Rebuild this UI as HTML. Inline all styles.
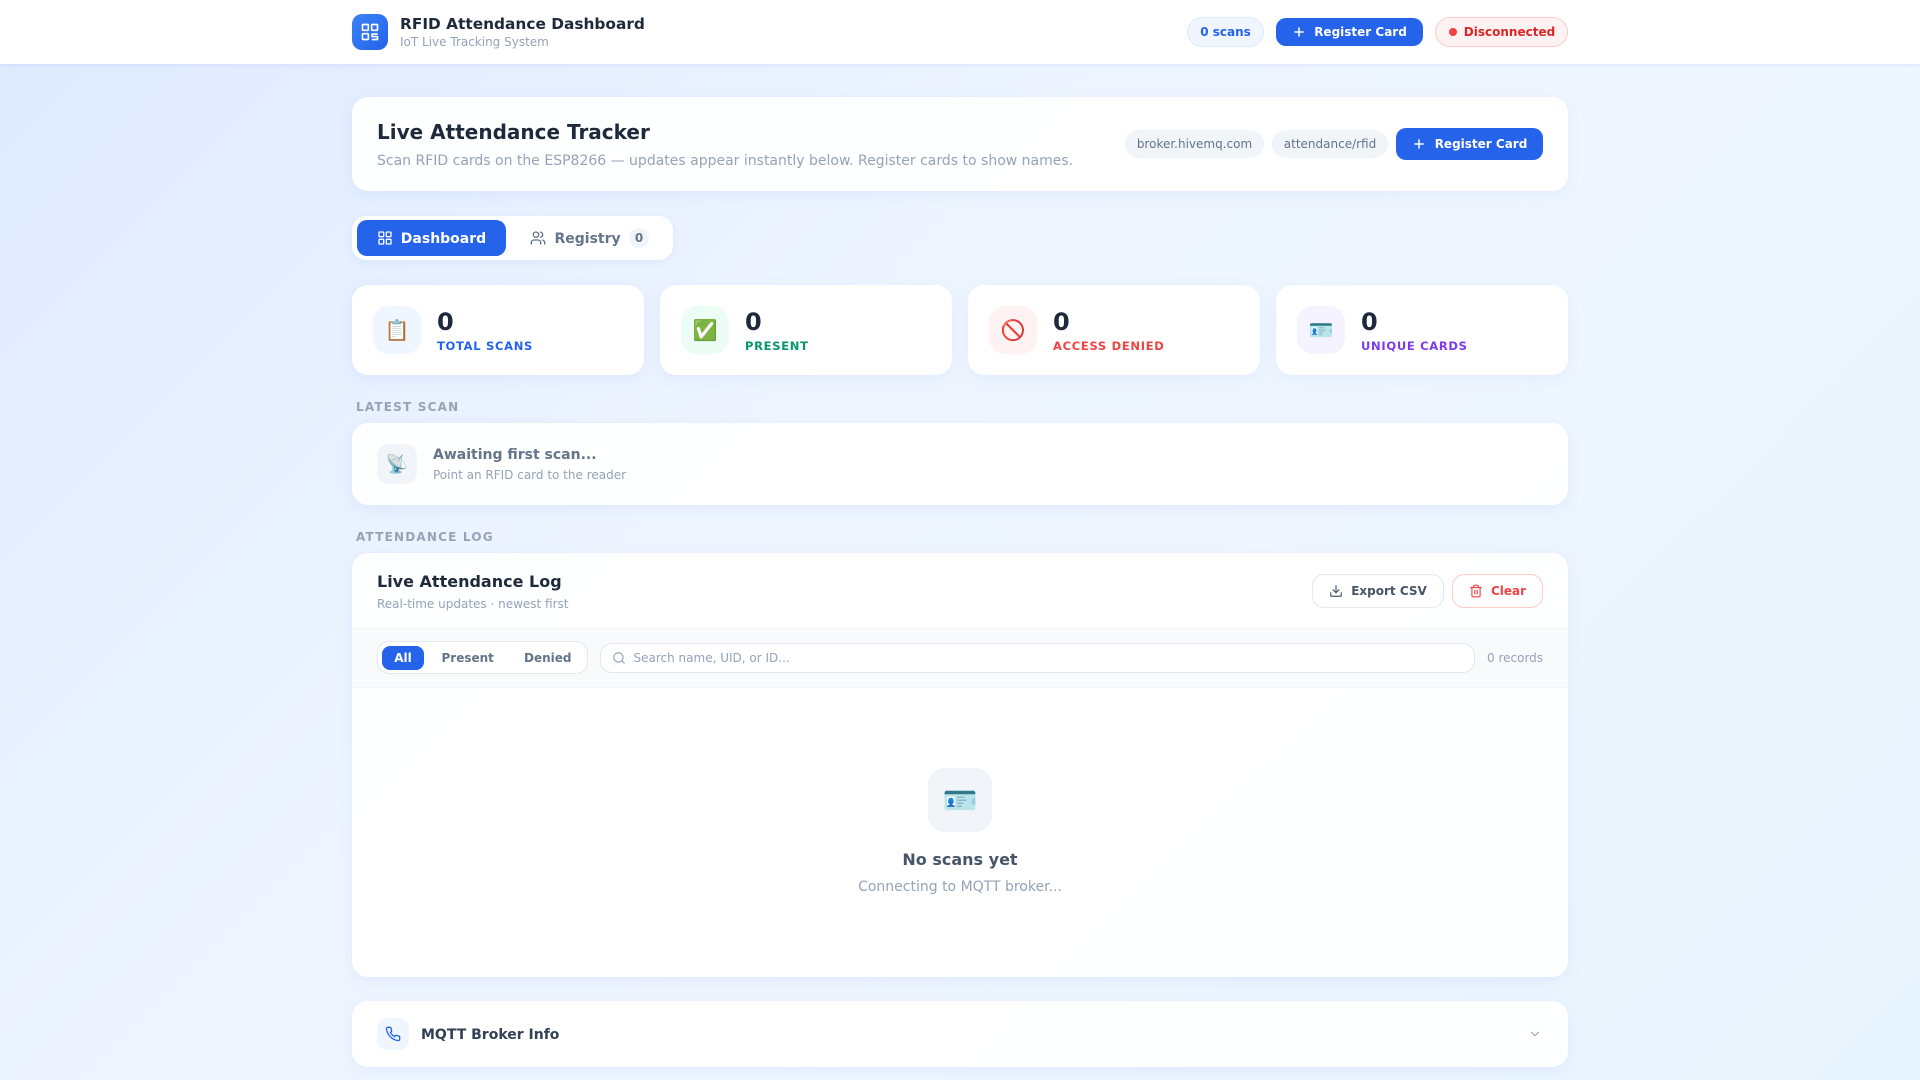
<!DOCTYPE html>
<html lang="en">
<head>
<meta charset="utf-8">
<title>RFID Attendance Dashboard</title>
<style>
*{box-sizing:border-box;margin:0;padding:0}
html,body{width:1920px;height:1080px;overflow:hidden}
body{position:relative;font-family:"DejaVu Sans","Liberation Sans",sans-serif;background:linear-gradient(135deg,#deE9fe 0%,#eef5ff 40%,#eff6ff 60%,#e8f4fd 100%);color:#1e293b}
.a{position:absolute}
.fx{display:flex;align-items:center;justify-content:center;white-space:nowrap}
.card{position:absolute;left:352px;width:1216px;background:rgba(255,255,255,.95);border-radius:16px;box-shadow:0 4px 16px rgba(37,99,235,.07)}
.t{position:absolute;white-space:nowrap;line-height:1}
svg{display:block;fill:none;stroke:currentColor;stroke-linecap:round;stroke-linejoin:round}
.btn{position:absolute;background:#2563eb;color:#fff;font-weight:700;font-size:12px;gap:8px}
.chip{position:absolute;background:#f1f5f9;color:#64748b;font-size:12px;border-radius:14px}
.stat{position:absolute;top:285px;width:292px;height:90px;background:rgba(255,255,255,.97);border-radius:16px;box-shadow:0 4px 16px rgba(37,99,235,.07)}
.ic{position:absolute;left:21px;top:21px;width:48px;height:48px;border-radius:16px;font-size:20px;line-height:1}
.num{position:absolute;left:85px;top:25px;font-size:24px;font-weight:700;line-height:24px;color:#1e293b}
.lbl{position:absolute;left:85px;top:54px;font-size:11.52px;font-weight:700;letter-spacing:.69px;line-height:14px;white-space:nowrap}
.sec{position:absolute;left:356px;font-size:12px;font-weight:700;letter-spacing:1.2px;color:#94a3b8;line-height:14px;white-space:nowrap}
</style>
</head>
<body>
<div class="a" style="left:0;top:0;width:1920px;height:64px;background:#fff;box-shadow:0 1px 4px rgba(37,99,235,.1)"></div>
<div class="a fx" style="left:352px;top:14px;width:36px;height:36px;border-radius:10px;background:linear-gradient(135deg,#3b82f6,#2563eb);color:#fff">
<svg width="20" height="20" viewBox="0 0 24 24" stroke-width="2"><rect x="3" y="3" width="7" height="7" rx="1"/><rect x="14" y="3" width="7" height="7" rx="1"/><rect x="3" y="14" width="7" height="7" rx="1"/><path d="M20.5 14.5h-6v3h6.5v3.5h-6"/></svg></div>
<div class="t" style="left:400px;top:15px;font-size:15.36px;font-weight:700;line-height:18px;color:#1e293b">RFID Attendance Dashboard</div>
<div class="t" style="left:400px;top:35px;font-size:12px;line-height:14px;color:#94a3b8">IoT Live Tracking System</div>

<div class="a fx" style="left:1187px;top:17px;width:77px;height:30px;border-radius:15px;background:#eff6ff;border:1px solid #dbeafe;color:#2563eb;font-size:12px;font-weight:700">0 scans</div>
<div class="btn fx" style="left:1276px;top:18px;width:147px;height:28px;border-radius:10px;gap:7px"><svg width="14" height="14" viewBox="0 0 24 24" stroke-width="2.5" style="margin-right:1px"><path d="M12 5v14M5 12h14"/></svg>Register Card</div>
<div class="a fx" style="left:1435px;top:17px;width:133px;height:30px;border-radius:15px;background:#fef2f2;border:1px solid #fecaca;color:#dc2626;font-size:12px;font-weight:700;gap:7px;padding-left:1px"><span style="width:8px;height:8px;border-radius:50%;background:#ef4444"></span>Disconnected</div>

<div class="card" style="top:97px;height:94px"></div>
<div class="t" style="left:377px;top:120px;font-size:20px;font-weight:700;line-height:24px;color:#1e293b">Live Attendance Tracker</div>
<div class="t" style="left:377px;top:153px;font-size:14px;line-height:16px;color:#94a3b8">Scan RFID cards on the ESP8266 — updates appear instantly below. Register cards to show names.</div>
<div class="chip fx" style="left:1125px;top:130px;width:139px;height:28px">broker.hivemq.com</div>
<div class="chip fx" style="left:1272px;top:130px;width:116px;height:28px">attendance/rfid</div>
<div class="btn fx" style="left:1396px;top:128px;width:147px;height:32px;border-radius:10px"><svg width="14" height="14" viewBox="0 0 24 24" stroke-width="2.5" style="margin-right:1px"><path d="M12 5v14M5 12h14"/></svg>Register Card</div>

<div class="a" style="left:352px;top:216px;width:321px;height:44px;background:#fff;border-radius:14px;box-shadow:0 2px 8px rgba(37,99,235,.08)"></div>
<div class="a fx" style="left:357px;top:220px;width:149px;height:36px;border-radius:10px;background:#2563eb;color:#fff;font-size:14px;font-weight:700;gap:8px;padding-top:1px">
<svg width="16" height="16" viewBox="0 0 24 24" stroke-width="2" style="margin-top:-1px"><rect x="3" y="3" width="7" height="7" rx="1"/><rect x="14" y="3" width="7" height="7" rx="1"/><rect x="3" y="14" width="7" height="7" rx="1"/><rect x="14" y="14" width="7" height="7" rx="1"/></svg>Dashboard</div>
<svg class="a" style="left:530px;top:230px;color:#64748b" width="16" height="16" viewBox="0 0 24 24" stroke-width="2"><path d="M16 21v-2a4 4 0 0 0-4-4H6a4 4 0 0 0-4 4v2"/><circle cx="9" cy="7" r="4"/><path d="M22 21v-2a4 4 0 0 0-3-3.87"/><path d="M16 3.13a4 4 0 0 1 0 7.75"/></svg>
<div class="t" style="left:554.5px;top:231px;font-size:14px;font-weight:700;line-height:16px;color:#64748b">Registry</div>
<div class="a fx" style="left:629px;top:228px;width:20px;height:20px;border-radius:10px;background:#f1f5f9;color:#64748b;font-size:12px;font-weight:700">0</div>

<div class="stat" style="left:352px"><div class="ic fx" style="background:#eff6ff">📋</div><div class="num">0</div><div class="lbl" style="color:#2563eb">TOTAL SCANS</div></div>
<div class="stat" style="left:660px"><div class="ic fx" style="background:#ecfdf5">✅</div><div class="num">0</div><div class="lbl" style="color:#059669">PRESENT</div></div>
<div class="stat" style="left:968px"><div class="ic fx" style="background:#fef2f2">🚫</div><div class="num">0</div><div class="lbl" style="color:#ef4444">ACCESS DENIED</div></div>
<div class="stat" style="left:1276px"><div class="ic fx" style="background:#f5f3ff">🪪</div><div class="num">0</div><div class="lbl" style="color:#7c3aed">UNIQUE CARDS</div></div>

<div class="sec" style="top:400px">LATEST SCAN</div>
<div class="card" style="top:423px;height:82px"></div>
<div class="a fx" style="left:377px;top:444px;width:40px;height:40px;border-radius:12px;background:#f1f5f9;font-size:18px">📡</div>
<div class="t" style="left:433px;top:447px;font-size:14px;font-weight:700;line-height:16px;color:#64748b">Awaiting first scan...</div>
<div class="t" style="left:433px;top:468px;font-size:12px;line-height:14px;color:#94a3b8">Point an RFID card to the reader</div>

<div class="sec" style="top:530px">ATTENDANCE LOG</div>
<div class="card" style="top:553px;height:424px;overflow:hidden">
<div class="a" style="left:0;top:75px;width:1216px;height:60px;background:#f8fafc;border-top:1px solid #f1f5f9;border-bottom:1px solid #f1f5f9"></div>
</div>
<div class="t" style="left:377px;top:573px;font-size:16px;font-weight:700;line-height:18px;color:#1e293b">Live Attendance Log</div>
<div class="t" style="left:377px;top:597px;font-size:12px;line-height:14px;color:#94a3b8">Real-time updates · newest first</div>
<div class="a fx" style="left:1312px;top:574px;width:132px;height:34px;border-radius:12px;background:#fff;border:1px solid #e2e8f0;color:#475569;font-size:12px;font-weight:700;gap:8px">
<svg width="14" height="14" viewBox="0 0 24 24" stroke-width="2"><path d="M21 15v4a2 2 0 0 1-2 2H5a2 2 0 0 1-2-2v-4"/><path d="M7 10l5 5 5-5"/><path d="M12 15V3"/></svg>Export CSV</div>
<div class="a fx" style="left:1452px;top:574px;width:91px;height:34px;border-radius:12px;background:#fff;border:1px solid #fecaca;color:#ef4444;font-size:12px;font-weight:700;gap:8px">
<svg width="14" height="14" viewBox="0 0 24 24" stroke-width="2"><path d="M3 6h18"/><path d="M19 6v14a2 2 0 0 1-2 2H7a2 2 0 0 1-2-2V6"/><path d="M8 6V4a2 2 0 0 1 2-2h4a2 2 0 0 1 2 2v2"/><path d="M10 11v6M14 11v6"/></svg>Clear</div>

<div class="a" style="left:377px;top:641px;width:211px;height:33px;border-radius:12px;background:#fff;border:1px solid #e2e8f0"></div>
<div class="a fx" style="left:382px;top:646px;width:42px;height:24px;border-radius:8px;background:#2563eb;color:#fff;font-size:12px;font-weight:700">All</div>
<div class="t" style="left:441.5px;top:651px;font-size:12px;font-weight:700;line-height:14px;color:#64748b">Present</div>
<div class="t" style="left:524px;top:651px;font-size:12px;font-weight:700;line-height:14px;color:#64748b">Denied</div>
<div class="a" style="left:600px;top:643px;width:875px;height:30px;border-radius:12px;background:#fff;border:1px solid #e2e8f0"></div>
<svg class="a" style="left:612px;top:651px;color:#94a3b8" width="14" height="14" viewBox="0 0 24 24" stroke-width="2"><circle cx="11" cy="11" r="8"/><path d="M21 21l-4.3-4.3"/></svg>
<div class="t" style="left:633.5px;top:651px;font-size:12px;line-height:14px;color:#94a3b8">Search name, UID, or ID...</div>
<div class="t" style="left:1487px;top:651px;font-size:12px;line-height:14px;color:#94a3b8">0 records</div>

<div class="a fx" style="left:928px;top:768px;width:64px;height:64px;border-radius:16px;background:#f1f5f9;font-size:28px">🪪</div>
<div class="t" style="left:352px;width:1216px;text-align:center;top:851px;font-size:16px;font-weight:700;line-height:18px;color:#475569">No scans yet</div>
<div class="t" style="left:352px;width:1216px;text-align:center;top:879px;font-size:14px;line-height:16px;color:#94a3b8">Connecting to MQTT broker...</div>

<div class="card" style="top:1001px;height:66px"></div>
<div class="a fx" style="left:377px;top:1018px;width:32px;height:32px;border-radius:10px;background:#eff6ff;color:#2563eb">
<svg width="16" height="16" viewBox="0 0 24 24" stroke-width="2"><path d="M22 16.92v3a2 2 0 0 1-2.18 2 19.8 19.8 0 0 1-8.63-3.07 19.5 19.5 0 0 1-6-6A19.8 19.8 0 0 1 2.12 4.18 2 2 0 0 1 4.11 2h3a2 2 0 0 1 2 1.72c.13.96.36 1.9.7 2.81a2 2 0 0 1-.45 2.11L8.09 9.91a16 16 0 0 0 6 6l1.27-1.27a2 2 0 0 1 2.11-.45c.91.34 1.85.57 2.81.7A2 2 0 0 1 22 16.92z"/></svg></div>
<div class="t" style="left:421px;top:1027px;font-size:14px;font-weight:700;line-height:16px;color:#334155">MQTT Broker Info</div>
<svg class="a" style="left:1528px;top:1027px;color:#94a3b8" width="14" height="14" viewBox="0 0 24 24" stroke-width="2"><path d="M6 9l6 6 6-6"/></svg>
</body>
</html>
